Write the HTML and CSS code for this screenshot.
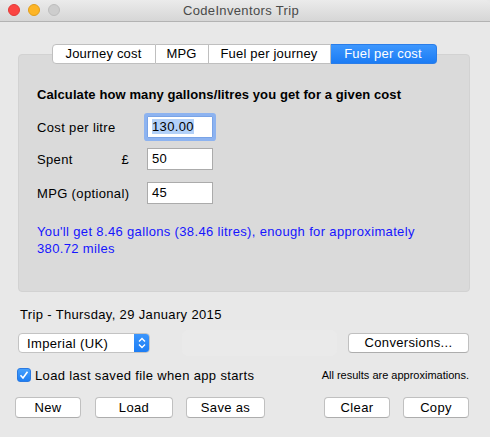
FILE: index.html
```html
<!DOCTYPE html>
<html>
<head>
<meta charset="utf-8">
<link rel="stylesheet" href="styles.css">
</head>
<body>
<div class="window">
  <div class="titlebar">
    <div class="lights">
      <span class="light red"></span>
      <span class="light yellow"></span>
      <span class="light gray"></span>
    </div>
    <div class="title">CodeInventors Trip</div>
  </div>
  <div class="content">
    <div class="tabview">
      <div class="tabs">
        <div class="tab">Journey cost</div>
        <div class="tab">MPG</div>
        <div class="tab">Fuel per journey</div>
        <div class="tab active">Fuel per cost</div>
      </div>
      <div class="panel">
        <div class="heading">Calculate how many gallons/litres you get for a given cost</div>
        <div class="row r1">
          <div class="label">Cost per litre</div>
          <div class="field focus"><span class="sel">130.00</span></div>
        </div>
        <div class="row r2">
          <div class="label split"><span>Spent</span><span>£</span></div>
          <div class="field">50</div>
        </div>
        <div class="row r3">
          <div class="label">MPG (optional)</div>
          <div class="field">45</div>
        </div>
        <div class="result">You'll get 8.46 gallons (38.46 litres), enough for approximately 380.72 miles</div>
      </div>
    </div>
    <div class="trip">Trip - Thursday, 29 January 2015</div>
    <div class="controls">
      <div class="popup">
        <span class="popup-text">Imperial (UK)</span>
        <span class="stepper">
          <svg width="16" height="20" viewBox="0 0 16 20"><path d="M5 8.5 L8 5.5 L11 8.5" fill="none" stroke="#fff" stroke-width="1.4"/><path d="M5 11.5 L8 14.5 L11 11.5" fill="none" stroke="#fff" stroke-width="1.4"/></svg>
        </span>
      </div>
      <div class="ghost"></div>
      <div class="btn conv">Conversions...</div>
    </div>
    <div class="checkrow">
      <label class="check">
        <span class="box"><svg width="14" height="14" viewBox="0 0 14 14"><path d="M3.5 7.3 L6 10 L10.5 3.8" fill="none" stroke="#fff" stroke-width="1.6"/></svg></span>
        <span>Load last saved file when app starts</span>
      </label>
      <span class="note">All results are approximations.</span>
    </div>
    <div class="buttons">
      <div class="btn b-new">New</div>
      <div class="btn b-load">Load</div>
      <div class="btn b-save">Save as</div>
      <div class="spacer"></div>
      <div class="btn b-clear">Clear</div>
      <div class="btn b-copy">Copy</div>
    </div>
  </div>
</div>
</body>
</html>
```
FILE: styles.css
```css
* { box-sizing: border-box; }
html, body { margin: 0; padding: 0; }
body {
  width: 490px;
  height: 437px;
  background: #e8e8e8;
  font-family: "Liberation Sans", Arial, sans-serif;
  font-size: 13px;
  letter-spacing: 0.35px;
  color: #000;
  overflow: hidden;
}
.window {
  width: 490px;
  height: 437px;
  background: #e8e8e8;
  border-radius: 5px 5px 0 0;
}
.titlebar {
  height: 22px;
  background: linear-gradient(#ebebeb, #d6d6d6);
  border-bottom: 1px solid #b3b3b3;
  border-radius: 5px 5px 0 0;
  display: flex;
  align-items: center;
  position: relative;
}
.lights {
  display: flex;
  gap: 8px;
  padding-left: 8px;
  margin-top: -1px;
}
.light {
  width: 12px;
  height: 12px;
  border-radius: 50%;
  display: block;
}
.red { background: #fb4542; border: 1px solid #e23a37; }
.yellow { background: #fdb526; border: 1px solid #e19e1a; }
.gray { background: #cdcdcd; border: 1px solid #bdbdbd; }
.title {
  flex: 1;
  text-align: center;
  color: #4a4a4a;
  margin-left: -68px;
  font-size: 13px;
}
.content {
  padding: 22px 20px 0 18px;
}
.tabs {
  display: flex;
  justify-content: center;
  position: relative;
  z-index: 1;
  margin-bottom: -10px;
}
.tab {
  height: 20px;
  line-height: 18px;
  background: #fff;
  border: 1px solid #bfbfbf;
  border-left: none;
  padding: 0 4px;
  text-align: center;
  letter-spacing: 0.2px;
}
.tab:first-child {
  border-left: 1px solid #bfbfbf;
  border-radius: 4px 0 0 4px;
  width: 104px;
}
.tab:nth-child(2) { width: 53px; }
.tab:nth-child(3) { width: 122px; }
.tab.active {
  width: 106px;
  background: linear-gradient(#3d97fd, #1b7cf4);
  border-color: #2a7de8;
  color: #fff;
  border-radius: 0 4px 4px 0;
}
.panel {
  height: 238px;
  background: #dadada;
  border: 1px solid #d2d2d2;
  border-radius: 4px;
  padding: 32px 0 0 18px;
}
.heading {
  font-weight: bold;
  line-height: 16px;
  margin-bottom: 13px;
  letter-spacing: 0.1px;
}
.row {
  display: flex;
  align-items: center;
  height: 22px;
}
.r2 { margin-top: 10px; }
.r3 { margin-top: 12px; }
.label {
  width: 110px;
}
.label.split {
  display: flex;
  justify-content: space-between;
  padding-right: 18px;
}
.field {
  width: 66px;
  height: 22px;
  background: #fff;
  border: 1px solid #ababab;
  padding-left: 4px;
  line-height: 20px;
}
.field.focus {
  border-color: #79a3e6;
  box-shadow: 0 0 0 3px #8db3f0;
  border-radius: 1px;
}
.sel {
  background: #b3d1f8;
}
.result {
  color: #1515ff;
  line-height: 17px;
  margin-top: 19px;
  width: 405px;
}
.trip {
  padding-left: 2px;
  line-height: 16px;
  margin-top: 15px;
}
.controls {
  display: flex;
  align-items: center;
  margin-top: 10px;
  height: 20px;
}
.popup {
  width: 132px;
  height: 20px;
  background: #fff;
  border: 1px solid #c3c3c3;
  border-radius: 4px;
  display: flex;
  align-items: center;
  overflow: hidden;
}
.popup-text {
  flex: 1;
  padding-left: 8px;
}
.stepper {
  width: 16px;
  height: 20px;
  background: linear-gradient(#3d97fd, #1b7cf4);
  display: flex;
  align-items: center;
  justify-content: center;
  margin-top: -1px;
  margin-bottom: -1px;
  margin-right: -1px;
}
.ghost {
  width: 155px;
  height: 26px;
  margin-left: 32px;
  background: #eaeaea;
  border-radius: 6px;
}
.btn {
  height: 21px;
  background: #fff;
  border: 1px solid #c0c0c0;
  border-bottom-color: #adadad;
  border-radius: 4px;
  text-align: center;
  line-height: 19px;
}
.conv {
  width: 121px;
  height: 20px;
  line-height: 18px;
  margin-left: auto;
  margin-right: 1px;
}
.checkrow {
  display: flex;
  align-items: center;
  margin-top: 15px;
  height: 14px;
}
.check {
  display: flex;
  align-items: center;
  gap: 4px;
  margin-left: -1px;
}
.box {
  width: 14px;
  height: 14px;
  border-radius: 3px;
  background: linear-gradient(#45a0fd, #1d7ef3);
  border: 1px solid #2b7ae2;
  display: flex;
  align-items: center;
  justify-content: center;
}
.box svg { display: block; margin: -1px; }
.note {
  margin-left: auto;
  font-size: 11px;
  letter-spacing: 0;
  margin-right: 1px;
}
.buttons {
  display: flex;
  margin-top: 15px;
  margin-left: -3px;
}
.b-new { width: 66px; }
.b-load { width: 78px; margin-left: 14px; }
.b-save { width: 79px; margin-left: 13px; }
.spacer { flex: 1; }
.b-clear { width: 66px; }
.b-copy { width: 66px; margin-left: 13px; margin-right: 1px; }
```
